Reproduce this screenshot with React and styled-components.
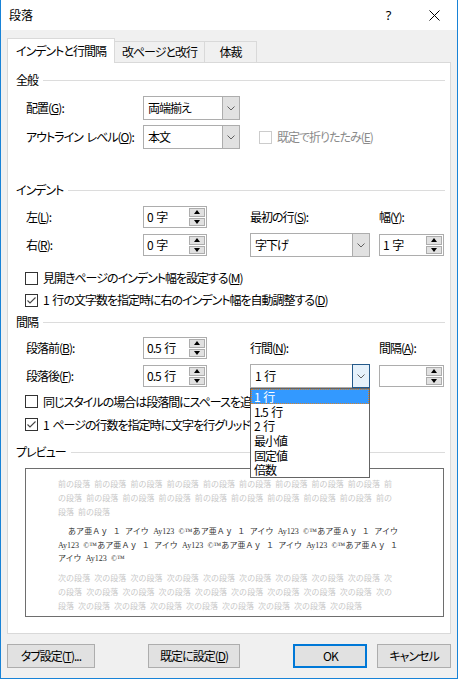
import React from "react";
import styled, { createGlobalStyle } from "styled-components";

const GlobalStyle = createGlobalStyle`
  html, body { margin: 0; padding: 0; background: #fff; }
  body {
    font-family: "Noto Sans CJK JP", "Noto Sans", sans-serif;
    font-size: 12px;
    color: #000;
  }
  * { box-sizing: border-box; }
  u { text-decoration: underline; text-underline-offset: 1px; }
`;

const Window = styled.div`
  width: 458px;
  height: 679px;
  background: #f0f0f0;
  border: 1px solid #1883d7;
  border-top: none;
  display: flex;
  flex-direction: column;
  font-feature-settings: "palt";
  letter-spacing: -1px;
  word-spacing: 2px;
  overflow: hidden;
`;

const TitleBar = styled.div`
  height: 30px;
  flex-shrink: 0;
  background: #fff;
  display: flex;
  align-items: center;
  padding-left: 8px;
`;

const Title = styled.div`
  flex: 1;
  line-height: 16px;
  letter-spacing: 0;
`;

const TitleButton = styled.div`
  width: 46px;
  height: 30px;
  display: flex;
  align-items: center;
  justify-content: center;
  font-family: "Noto Sans", sans-serif;
  font-size: 13px;
`;

const Body = styled.div`
  padding: 8px 6px 0 6px;
`;

const TabRow = styled.div`
  display: flex;
  align-items: flex-end;
  height: 25px;
  margin-bottom: -1px;
  position: relative;
  z-index: 1;
`;

const Tab = styled.div`
  width: ${(p) => p.$w}px;
  height: ${(p) => (p.$active ? 25 : 21)}px;
  margin-bottom: ${(p) => (p.$active ? 0 : 1)}px;
  background: ${(p) => (p.$active ? "#fff" : "#f0f0f0")};
  border: 1px solid #d9d9d9;
  border-bottom: none;
  border-left: ${(p) => (p.$first ? "1px solid #d9d9d9" : "none")};
  display: flex;
  align-items: center;
  justify-content: center;
  line-height: 16px;
  white-space: nowrap;
`;

const Panel = styled.div`
  width: 444px;
  background: #fff;
  border: 1px solid #d9d9d9;
  padding: 9px 5px 16px 8px;
`;

const SectionHeader = styled.div`
  display: flex;
  align-items: center;
  gap: 5px;
  height: 16px;
  line-height: 16px;
  margin-top: ${(p) => p.$mt || 0}px;
  &::after {
    content: "";
    flex: 1;
    height: 1px;
    background: #dcdcdc;
  }
`;

const FormGrid = styled.div`
  display: grid;
  grid-template-columns: 117px 107px 129px 65px;
  grid-auto-rows: 24px;
  row-gap: ${(p) => p.$gap}px;
  align-items: center;
  margin-top: ${(p) => p.$mt}px;
  padding-left: 10px;
`;

const Label = styled.div`
  white-space: nowrap;
  line-height: 16px;
`;

const Cell = styled.div`
  grid-column: span ${(p) => p.$span || 1};
  position: relative;
`;

const SelectBox = styled.div`
  width: ${(p) => p.$w}px;
  height: ${(p) => p.$h}px;
  background: #fff;
  border: 1px solid #adadad;
  display: flex;
`;

const SelectValue = styled.div`
  flex: 1;
  display: flex;
  align-items: center;
  padding-left: 4px;
  line-height: 16px;
  white-space: nowrap;
`;

const SelectButton = styled.div`
  width: ${(p) => (p.$focus ? 18 : 17)}px;
  margin: ${(p) => (p.$focus ? "-1px -1px -1px 0" : "0")};
  background: ${(p) => (p.$focus ? "#e5f1fb" : "#e1e1e1")};
  border: ${(p) => (p.$focus ? "1px solid #24598a" : "none")};
  border-left: 1px solid ${(p) => (p.$focus ? "#24598a" : "#adadad")};
  display: flex;
  align-items: center;
  justify-content: center;
`;

const DropList = styled.div`
  position: absolute;
  top: 100%;
  left: 0;
  width: 120px;
  background: #fff;
  border: 1px solid #646464;
  z-index: 5;
`;

const DropItem = styled.div`
  height: 14.7px;
  line-height: 13px;
  padding-left: 2px;
  white-space: nowrap;
  background: ${(p) => (p.$selected ? "#3399ff" : "#fff")};
  color: ${(p) => (p.$selected ? "#fff" : "#000")};
  border: 1px ${(p) => (p.$selected ? "dotted #d9822b" : "solid transparent")};
`;

const SpinBox = styled.div`
  width: ${(p) => p.$w}px;
  height: 22px;
  background: #fff;
  border: 1px solid #adadad;
  display: flex;
`;

const SpinValue = styled.div`
  flex: 1;
  display: flex;
  align-items: center;
  padding-left: 3px;
  line-height: 16px;
  white-space: nowrap;
`;

const SpinButtons = styled.div`
  width: 17px;
  display: flex;
  flex-direction: column;
  gap: 1px;
  padding: 1px 1px 1px 0;
`;

const SpinButton = styled.div`
  flex: 1;
  background: #e1e1e1;
  border: 1px solid #adadad;
  display: flex;
  align-items: center;
  justify-content: center;
  &::after {
    content: "";
    border-left: 3.5px solid transparent;
    border-right: 3.5px solid transparent;
    ${(p) =>
      p.$down ? "border-top: 4px solid #000;" : "border-bottom: 4px solid #000;"}
  }
`;

const CheckRow = styled.div`
  display: flex;
  align-items: center;
  gap: 5px;
  height: ${(p) => p.$h}px;
  margin-left: 9px;
  margin-top: ${(p) => p.$mt || 0}px;
  white-space: nowrap;
  line-height: 16px;
  color: ${(p) => (p.$disabled ? "#8a8a8a" : "#000")};
`;

const Box = styled.div`
  width: 13px;
  height: 13px;
  flex-shrink: 0;
  background: #fff;
  border: 1px solid ${(p) => (p.$disabled ? "#cccccc" : "#333")};
  display: flex;
  align-items: center;
  justify-content: center;
`;

const Preview = styled.div`
  width: 419px;
  height: 149px;
  margin: 8px 0 0 9px;
  background: #fff;
  border: 1px solid #6e6e6e;
  padding: 8px 0 0 32px;
  font-feature-settings: normal;
  letter-spacing: 0;
  word-spacing: 0;
  font-size: 8px;
`;

const PreviewPara = styled.div`
  width: ${(p) => p.$w}px;
  line-height: ${(p) => p.$lh}px;
  margin-top: ${(p) => p.$mt || 0}px;
  text-align: justify;
  word-spacing: 2.2px;
  color: ${(p) => (p.$sample ? "#333" : "#c8c8c8")};
  text-indent: ${(p) => (p.$sample ? 10 : 0)}px;
  font-family: ${(p) =>
    p.$sample
      ? '"Liberation Serif", "Noto Sans CJK JP", serif'
      : '"Noto Sans CJK JP", sans-serif'};
`;

const Footer = styled.div`
  display: flex;
  margin-top: 10px;
`;

const Button = styled.div`
  width: ${(p) => p.$w}px;
  height: 24px;
  margin-left: ${(p) => p.$ml || 0}px;
  background: #e1e1e1;
  border: ${(p) => (p.$default ? "2px solid #0078d7" : "1px solid #adadad")};
  display: flex;
  align-items: center;
  justify-content: center;
  line-height: 16px;
  white-space: nowrap;
`;

const Chevron = () => (
  <svg width="8" height="5" viewBox="0 0 8 5">
    <path d="M0.5 0.5 L4 4 L7.5 0.5" fill="none" stroke="#606060" strokeWidth="1" />
  </svg>
);

const Select = ({ w, h = 24, value, focus, children }) => (
  <SelectBox $w={w} $h={h}>
    <SelectValue>{value}</SelectValue>
    <SelectButton $focus={focus}>
      <Chevron />
    </SelectButton>
    {children}
  </SelectBox>
);

const Spinner = ({ w = 64, value }) => (
  <SpinBox $w={w}>
    <SpinValue>{value}</SpinValue>
    <SpinButtons>
      <SpinButton />
      <SpinButton $down />
    </SpinButtons>
  </SpinBox>
);

const Checkbox = ({ checked, disabled, h = 22, mt, children }) => (
  <CheckRow $h={h} $mt={mt} $disabled={disabled}>
    <Box $disabled={disabled}>
      {checked && (
        <svg width="11" height="11" viewBox="0 0 11 11">
          <path d="M1.5 5.5 L4 8 L9.5 2.5" fill="none" stroke="#444" strokeWidth="1.1" />
        </svg>
      )}
    </Box>
    <span>{children}</span>
  </CheckRow>
);

const lineOptions = ["1 行", "1.5 行", "2 行", "最小値", "固定値", "倍数"];

const repeat = (s, n) => Array.from({ length: n }, () => s).join("");

export default function App() {
  return (
    <Window>
      <GlobalStyle />
      <TitleBar>
        <Title>段落</Title>
        <TitleButton>?</TitleButton>
        <TitleButton>
          <svg width="11" height="11" viewBox="0 0 11 11">
            <path d="M0.5 0.5 L10.5 10.5 M10.5 0.5 L0.5 10.5" stroke="#000" strokeWidth="1" />
          </svg>
        </TitleButton>
      </TitleBar>

      <Body>
        <TabRow>
          <Tab $w={108} $active $first>インデントと行間隔</Tab>
          <Tab $w={90}>改ページと改行</Tab>
          <Tab $w={52}>体裁</Tab>
        </TabRow>

        <Panel>
          <SectionHeader>全般</SectionHeader>
          <FormGrid $gap={5} $mt={8}>
            <Label>配置(<u>G</u>):</Label>
            <Select w={97} value="両端揃え" />
            <span />
            <span />
            <Label>アウトライン レベル(<u>O</u>):</Label>
            <Select w={97} value="本文" />
            <Cell $span={2}>
              <Checkbox disabled h={24}>既定で折りたたみ(<u>E</u>)</Checkbox>
            </Cell>
          </FormGrid>

          <SectionHeader $mt={33}>インデント</SectionHeader>
          <FormGrid $gap={4} $mt={7}>
            <Label>左(<u>L</u>):</Label>
            <Spinner value="0 字" />
            <Label>最初の行(<u>S</u>):</Label>
            <Label>幅(<u>Y</u>):</Label>
            <Label>右(<u>R</u>):</Label>
            <Spinner value="0 字" />
            <Select w={120} value="字下げ" />
            <Spinner w={65} value="1 字" />
          </FormGrid>
          <Checkbox mt={10}>見開きページのインデント幅を設定する(<u>M</u>)</Checkbox>
          <Checkbox checked>1 行の文字数を指定時に右のインデント幅を自動調整する(<u>D</u>)</Checkbox>

          <SectionHeader $mt={3}>間隔</SectionHeader>
          <FormGrid $gap={4} $mt={6}>
            <Label>段落前(<u>B</u>):</Label>
            <Spinner value="0.5 行" />
            <Label>行間(<u>N</u>):</Label>
            <Label>間隔(<u>A</u>):</Label>
            <Label>段落後(<u>F</u>):</Label>
            <Spinner value="0.5 行" />
            <Cell>
              <Select w={120} value="1 行" focus />
              <DropList>
                {lineOptions.map((o, i) => (
                  <DropItem key={o} $selected={i === 0}>
                    {o}
                  </DropItem>
                ))}
              </DropList>
            </Cell>
            <Spinner w={65} value="" />
          </FormGrid>
          <Checkbox h={23} mt={2}>同じスタイルの場合は段落間にスペースを追加しない(<u>C</u>)</Checkbox>
          <Checkbox h={23} checked>1 ページの行数を指定時に文字を行グリッド線に合わせる(<u>W</u>)</Checkbox>

          <SectionHeader $mt={8}>プレビュー</SectionHeader>
          <Preview>
            <PreviewPara $w={334} $lh={14}>
              {repeat("前の段落 ", 20)}
            </PreviewPara>
            <PreviewPara $sample $w={340} $lh={13.5} $mt={6}>
              {repeat("あア亜Ａｙ １ アイウ Ay123 ©™", 6)}
            </PreviewPara>
            <PreviewPara $w={334} $lh={14} $mt={5.5}>
              {repeat("次の段落 ", 27)}
            </PreviewPara>
          </Preview>
        </Panel>

        <Footer>
          <Button $w={88}>タブ設定(<u>T</u>)...</Button>
          <Button $w={93} $ml={53}>既定に設定(<u>D</u>)</Button>
          <Button $w={74} $ml={53} $default>OK</Button>
          <Button $w={74} $ml={10}>キャンセル</Button>
        </Footer>
      </Body>
    </Window>
  );
}
